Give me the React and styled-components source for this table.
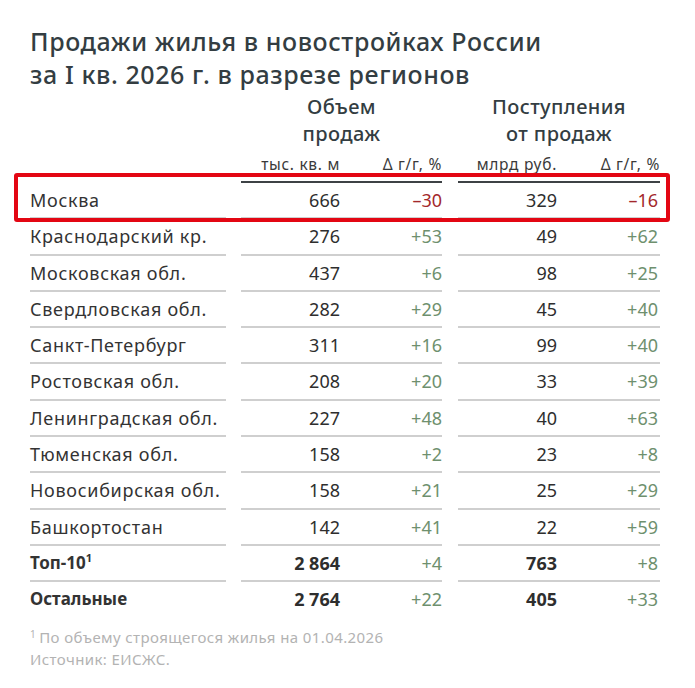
import React from 'react';
import styled, { createGlobalStyle } from 'styled-components';

const rows = [
  { name: 'Москва', v1: '666', d1: '-30', v2: '329', d2: '-16', mark: true },
  { name: 'Краснодарский кр.', v1: '276', d1: '+53', v2: '49', d2: '+62' },
  { name: 'Московская обл.', v1: '437', d1: '+6', v2: '98', d2: '+25' },
  { name: 'Свердловская обл.', v1: '282', d1: '+29', v2: '45', d2: '+40' },
  { name: 'Санкт-Петербург', v1: '311', d1: '+16', v2: '99', d2: '+40' },
  { name: 'Ростовская обл.', v1: '208', d1: '+20', v2: '33', d2: '+39' },
  { name: 'Ленинградская обл.', v1: '227', d1: '+48', v2: '40', d2: '+63' },
  { name: 'Тюменская обл.', v1: '158', d1: '+2', v2: '23', d2: '+8' },
  { name: 'Новосибирская обл.', v1: '158', d1: '+21', v2: '25', d2: '+29' },
  { name: 'Башкортостан', v1: '142', d1: '+41', v2: '22', d2: '+59' },
  { name: 'Топ-10', sup: '1', v1: '2 864', d1: '+4', v2: '763', d2: '+8', bold: true },
  { name: 'Остальные', v1: '2 764', d1: '+22', v2: '405', d2: '+33', bold: true, last: true },
];

const GlobalStyle = createGlobalStyle`
  body {
    margin: 0;
    background: #fff;
    font-family: "Noto Sans", "Liberation Sans", sans-serif;
  }
`;

const Page = styled.div`
  width: 695px;
  height: 688px;
  box-sizing: border-box;
  padding: 25px 0 0 30px;
  background: #fff;
  overflow: hidden;
`;

const Title = styled.h1`
  margin: 0;
  font-size: 25px;
  line-height: 33px;
  font-weight: 500;
  color: #333d42;
  letter-spacing: 0.6px;
`;

const HeadRow = styled.div`
  display: flex;
  width: 630px;
  margin-top: 2px;
`;

const Spacer = styled.div`
  width: 196px;
`;

const HeadGroup = styled.div`
  width: ${p => p.$w}px;
  margin-left: ${p => p.$gap}px;
  display: grid;
  grid-template-columns: 99px 1fr;
  border-bottom: 2px solid #3d4245;
`;

const GroupTitle = styled.div`
  grid-column: 1 / 3;
  text-align: center;
  font-size: 20px;
  line-height: 27px;
  letter-spacing: 0.4px;
  color: #333d42;
  font-weight: 500;
`;

const Unit = styled.div`
  text-align: right;
  font-size: 15.5px;
  line-height: 20px;
  letter-spacing: 0.7px;
  padding: 7px 0 7px;
  color: #3a3a3a;
  white-space: nowrap;
`;

const Row = styled.div`
  display: flex;
  width: 630px;
  position: relative;
  font-weight: ${p => (p.$bold ? 700 : 400)};
`;

const Highlight = styled.div`
  position: absolute;
  top: -10px;
  bottom: -3px;
  left: -16px;
  right: -10px;
  border: 4px solid #e30613;
  border-radius: 3px;
  pointer-events: none;
`;

const NameCell = styled.div`
  width: 196px;
  font-size: ${p => (p.$bold ? 17 : 18)}px;
  line-height: 34.3px;
  letter-spacing: ${p => (p.$bold ? 0 : 0.7)}px;
  color: #333;
  border-bottom: 2px solid ${p => (p.$last ? 'transparent' : '#cfcfcf')};
  white-space: nowrap;

  sup {
    font-size: 11px;
    line-height: 0;
    vertical-align: 7px;
  }
`;

const Group = styled.div`
  width: ${p => p.$w}px;
  margin-left: ${p => p.$gap}px;
  display: grid;
  grid-template-columns: 99px 1fr;
  border-bottom: 2px solid ${p => (p.$last ? 'transparent' : '#cfcfcf')};
`;

const Value = styled.div`
  text-align: right;
  font-size: 18px;
  line-height: 34.3px;
  color: #2e2e2e;
`;

const Delta = styled(Value)`
  color: ${p => (p.$neg ? '#a3282b' : '#6e906e')};
  font-weight: 400;
  padding-right: ${p => p.$pr || 0}px;
`;

const Footer = styled.div`
  margin-top: 7px;
  font-size: 15px;
  line-height: 22px;
  letter-spacing: 0.4px;
  color: #b3b3b3;

  sup {
    font-size: 10px;
    line-height: 0;
    vertical-align: 5px;
    margin-right: 3px;
  }
`;

const fmt = s => s.replace('-', '–');

export default function App() {
  return (
    <Page>
      <GlobalStyle />
      <Title>
        Продажи жилья в новостройках России
        <br />
        за I кв. 2026 г. в разрезе регионов
      </Title>
      <HeadRow>
        <Spacer />
        <HeadGroup $w={201} $gap={15}>
          <GroupTitle>Объем<br />продаж</GroupTitle>
          <Unit>тыс. кв. м</Unit>
          <Unit>Δ г/г, %</Unit>
        </HeadGroup>
        <HeadGroup $w={202} $gap={16}>
          <GroupTitle>Поступления<br />от продаж</GroupTitle>
          <Unit>млрд руб.</Unit>
          <Unit>Δ г/г, %</Unit>
        </HeadGroup>
      </HeadRow>
      {rows.map(r => (
        <Row key={r.name} $bold={r.bold}>
          {r.mark && <Highlight />}
          <NameCell $last={r.last} $bold={r.bold}>
            {r.name}
            {r.sup && <sup>{r.sup}</sup>}
          </NameCell>
          <Group $w={201} $gap={15} $last={r.last}>
            <Value>{r.v1}</Value>
            <Delta $neg={r.d1.startsWith('-')}>{fmt(r.d1)}</Delta>
          </Group>
          <Group $w={202} $gap={16} $last={r.last}>
            <Value>{r.v2}</Value>
            <Delta $neg={r.d2.startsWith('-')} $pr={2}>{fmt(r.d2)}</Delta>
          </Group>
        </Row>
      ))}
      <Footer>
        <sup>1</sup>По объему строящегося жилья на 01.04.2026
        <br />
        Источник: ЕИСЖС.
      </Footer>
    </Page>
  );
}
